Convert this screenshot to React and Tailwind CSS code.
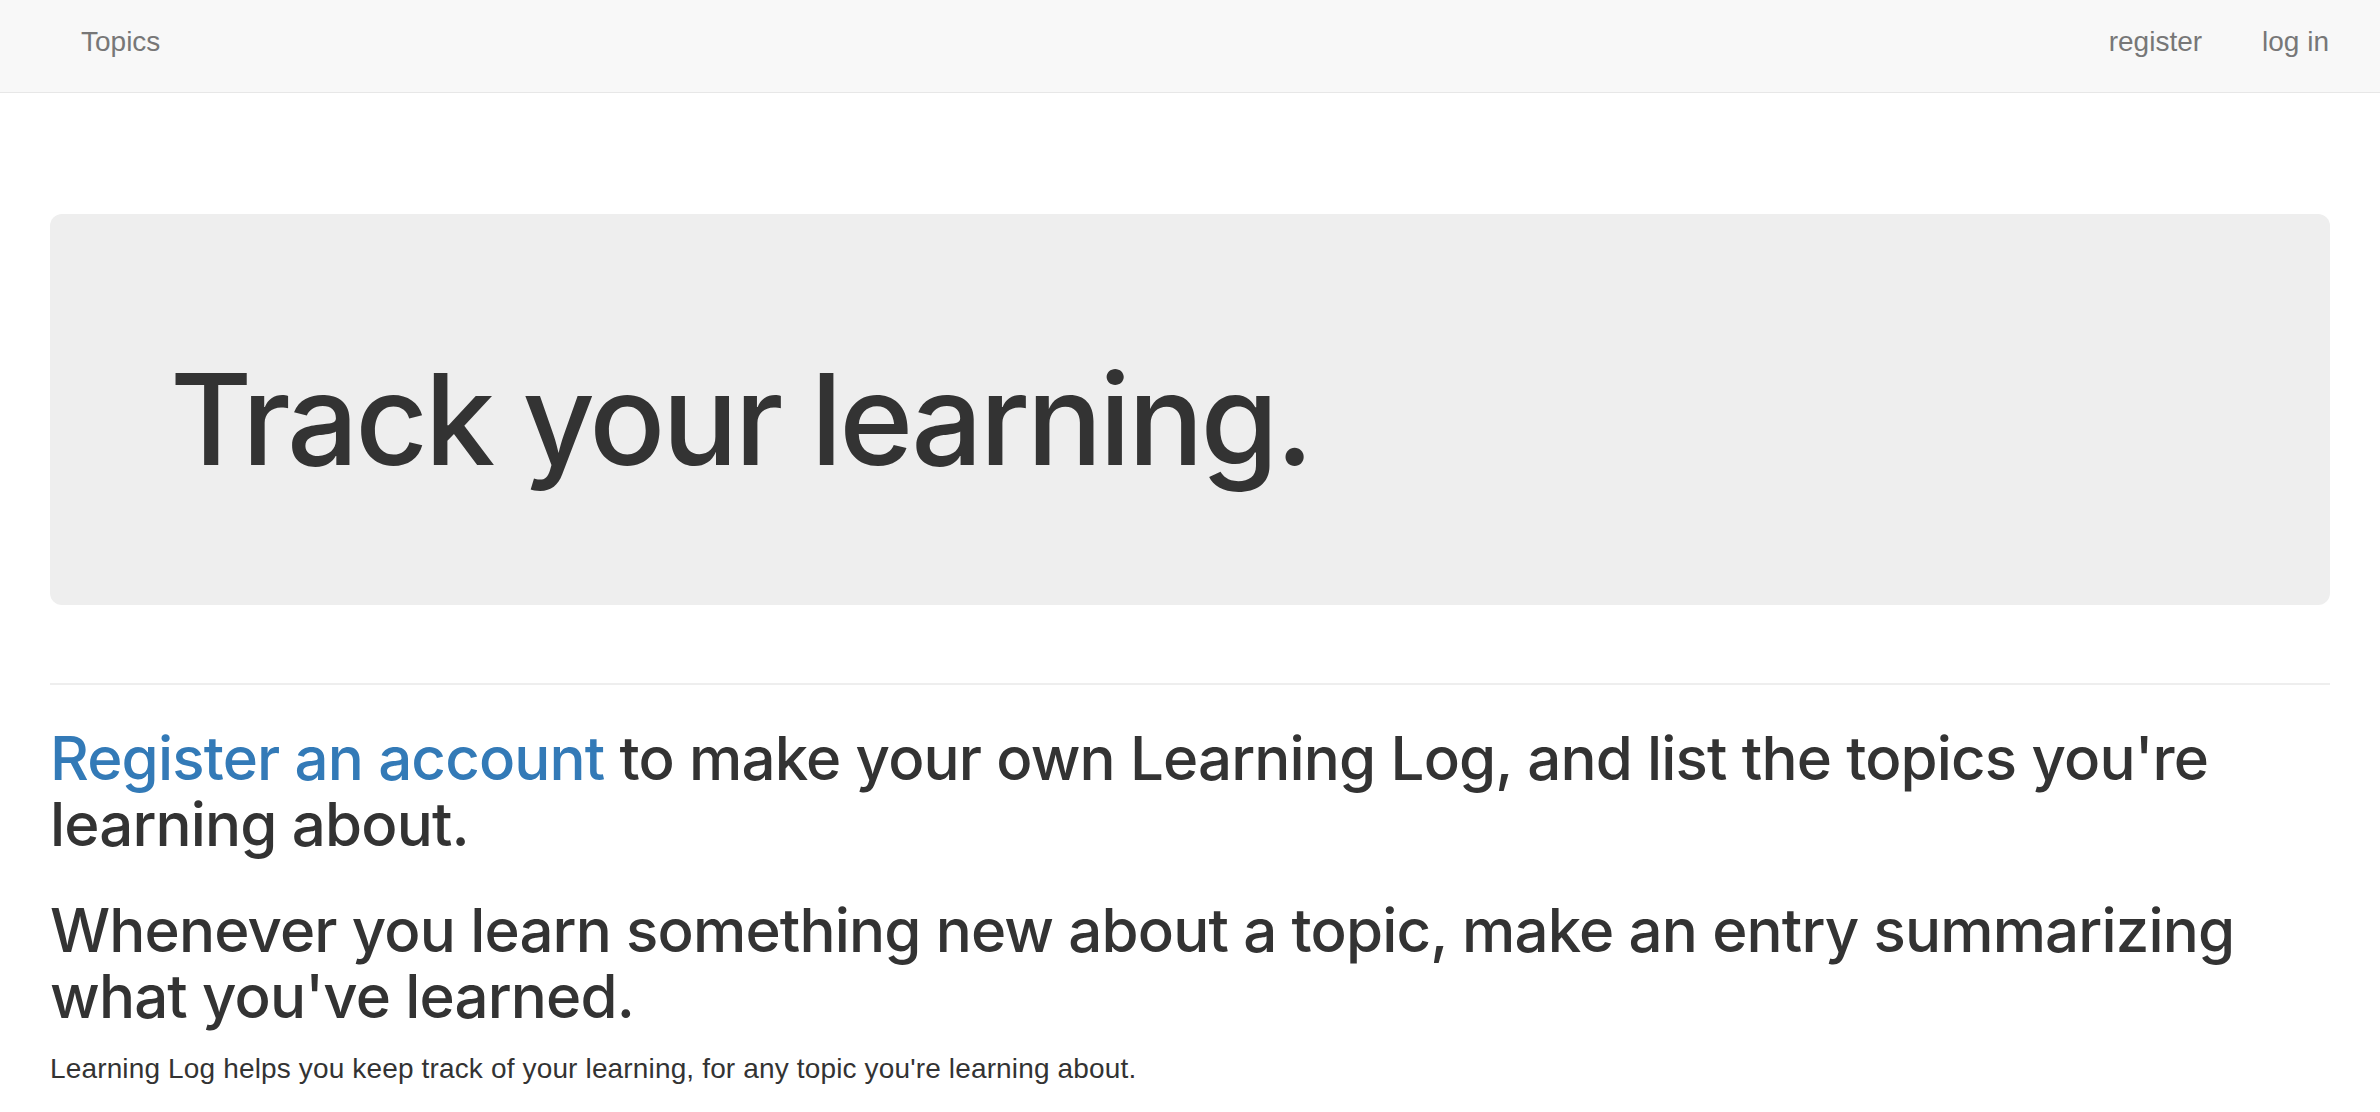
export default function App() {
  return (
    <div className="min-h-screen bg-white text-[#333333] font-['Liberation_Sans',Arial,sans-serif]">
      {/* Navbar */}
      <nav className="h-[93px] bg-[#f8f8f8] border-b border-[#e7e7e7] flex items-center justify-between pb-2 px-[51px] text-[28px] text-[#777777]">
        <a href="#" className="px-[30px]">Topics</a>
        <div className="flex items-center">
          <a href="#" className="px-[30px]">register</a>
          <a href="#" className="pl-[30px]">log in</a>
        </div>
      </nav>

      <div className="px-[50px]">
        {/* Page header with jumbotron */}
        <div className="pt-[121px] pb-[78px] border-b-2 border-[#eeeeee]">
          <div className="bg-[#eeeeee] rounded-[12px] px-[120px] py-[96px]">
            <h1 className="mt-[40px] mb-[20px] text-[126px] leading-[1.1] font-medium tracking-[-3.2px] font-['Inter',sans-serif]">
              Track your learning.
            </h1>
          </div>
        </div>

        <h2 className="mt-[40px] mb-[20px] text-[60px] leading-[1.1] font-medium tracking-[-0.85px] font-['Inter',sans-serif]">
          <a href="#" className="text-[#337ab7]">Register an account</a> to make your own Learning Log, and list the topics you're learning about.
        </h2>
        <h2 className="mt-[40px] mb-[20px] text-[60px] leading-[1.1] font-medium tracking-[-0.85px] font-['Inter',sans-serif]">
          Whenever you learn something new about a topic, make an entry summarizing what you've learned.
        </h2>
        <p className="text-[28px] leading-[40px] tracking-[0.15px]">
          Learning Log helps you keep track of your learning, for any topic you're learning about.
        </p>
      </div>
    </div>
  );
}
